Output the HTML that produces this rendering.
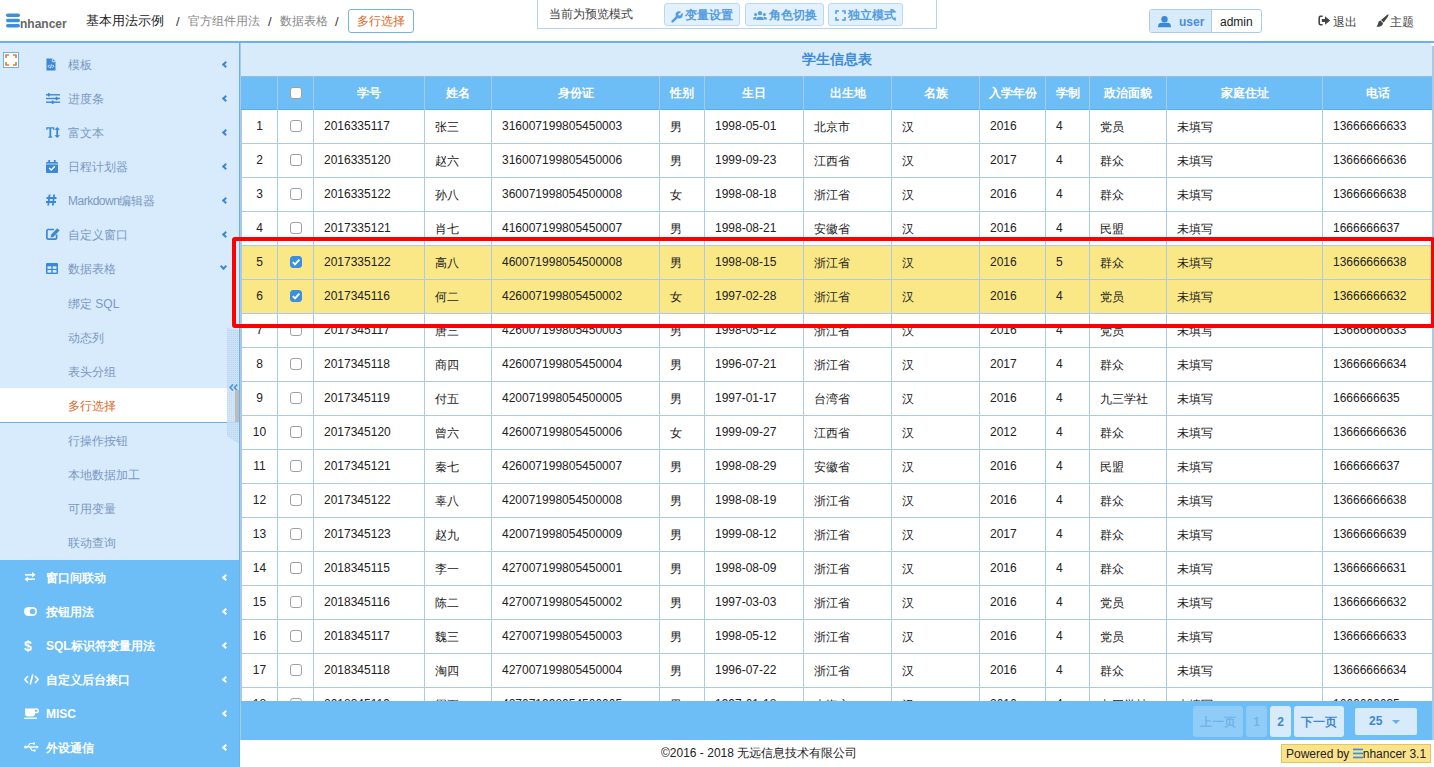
<!DOCTYPE html>
<html><head><meta charset="utf-8">
<style>
*{box-sizing:border-box}
html,body{margin:0;padding:0}
body{width:1434px;height:767px;overflow:hidden;position:relative;background:#fff;font-family:"Liberation Sans",sans-serif;color:#333}
.abs{position:absolute}
#hdr{position:absolute;left:0;top:0;width:1434px;height:43px;background:#fff;border-bottom:2px solid #6cb1e9}
#side{position:absolute;left:0;top:43px;width:240px;height:724px;background:#d8ebfc;border-right:1px solid #64b3ee;overflow:hidden}
.si{position:absolute;left:0;width:239px;height:34px}
.si .ico{position:absolute;left:46px;top:0;height:34px;display:flex;align-items:center}
.si .st{position:absolute;left:68px;top:1px;line-height:34px;font-size:12px;color:#7b98c2}
.chev{position:absolute;left:223px;top:15px;width:5px;height:5px;border-left:2px solid #3b88d4;border-bottom:2px solid #3b88d4;transform:rotate(45deg)}
.chev.down{transform:rotate(-45deg);left:221px;top:13px}
.chev.w{border-color:#fff}
.sub{position:absolute;left:0;width:239px;height:34px;line-height:37px;padding-left:68px;font-size:12px;color:#7b98c2}
.sub.act{background:#fff;color:#d9692a;border-bottom:1px solid #6cb1e9;height:35px}
#dark{position:absolute;left:0;top:517px;width:239px;height:220px;background:#6dbdf6}
.di{position:absolute;left:0;width:239px;height:34px}
.di .ico{position:absolute;left:24px;top:0;height:34px;display:flex;align-items:center}
.di .dt{position:absolute;left:46px;top:1px;line-height:34px;font-size:12px;color:#fff;font-weight:bold}
#main{position:absolute;left:241px;top:43px;width:1193px;height:697px;background:#d8ebfb;overflow:hidden}
#cap{position:absolute;left:0;top:0;width:1191px;height:33px;text-align:center;line-height:33px;font-size:14px;color:#3d8bd8;font-weight:bold}
#thead{position:absolute;left:0;top:33px;width:1191px;height:34px;background:#6dbdf6;border-top:1px solid #8dbde6;border-bottom:1px solid #5aaee9}
.hc{position:absolute;top:0;height:33px;line-height:33px;text-align:center;color:#fff;font-weight:bold;font-size:12px}
#tbody{position:absolute;left:0;top:67px;width:1191px;height:591px;background:#fff;overflow:hidden}
.row{position:absolute;left:0;width:1191px;height:34px;border-bottom:1px solid #a9cbe8;background:#fff}
.row.sel{background:#fae886}
.bc{position:absolute;top:0;height:33px;line-height:33px;font-size:12px;color:#222;padding-left:10px;white-space:nowrap}
.bc.ctr{text-align:center;padding-left:0}
.bc.cj{top:1px}
.vl{position:absolute;top:33px;width:1px;height:625px;background:#a9cbe8}
.hc.vlh{}
.c0{left:1px;width:35px}
.c1{left:37px;width:35px}
.c2{left:73px;width:110px}
.c3{left:184px;width:66px}
.c4{left:251px;width:167px}
.c5{left:419px;width:44px}
.c6{left:464px;width:98px}
.c7{left:563px;width:87px}
.c8{left:651px;width:87px}
.c9{left:739px;width:65px}
.c10{left:805px;width:43px}
.c11{left:849px;width:76px}
.c12{left:926px;width:155px}
.c13{left:1082px;width:109px}
.cb{display:inline-block;width:12px;height:12px;border:1px solid #a0a0a0;border-radius:3px;background:#fff;vertical-align:middle;position:relative;top:-1px;left:0px}
.cb.on{background:#3b8fe3;border-color:#3b8fe3}
.cb svg{position:absolute;left:-1px;top:-1px}
#pager{position:absolute;left:0;top:658px;width:1193px;height:39px;background:#6dbdf6}
.pb{position:absolute;top:5px;height:31px;line-height:33px;font-size:12px;text-align:center;border-radius:3px}
#foot{position:absolute;left:241px;top:740px;width:1193px;height:27px;background:#fff}

.hb{position:absolute;height:23px;background:#e2f1fd;border:1px solid #b9d8f3;border-radius:3px;font-size:12px;font-weight:bold;color:#559ce0;line-height:21px;display:flex;align-items:center;justify-content:center;white-space:nowrap;padding-top:2px}
#redbox{position:absolute;left:232px;top:237px;width:1203px;height:91px;border:4px solid #f00;border-radius:3px}
</style></head><body>
<div id="hdr">
  <svg class="abs" style="left:6px;top:13px" width="14" height="15" viewBox="0 0 14 15"><rect x="0" y="0.5" width="14" height="3.6" rx="1.8" fill="#3b8fdc"/><rect x="0" y="5.7" width="14" height="3.6" rx="1.8" fill="#3b8fdc"/><rect x="0" y="10.9" width="14" height="3.6" rx="1.8" fill="#3b8fdc"/></svg>
  <div class="abs" style="left:20px;top:17px;font-size:12px;font-weight:bold;color:#666;line-height:14px">nhancer</div>
  <div class="abs" style="left:86px;top:12px;font-size:13px;color:#222;line-height:18px">基本用法示例</div>
  <div class="abs" style="left:176px;top:13px;font-size:13px;color:#333;line-height:17px">/</div>
  <div class="abs" style="left:188px;top:13px;font-size:12px;color:#888;line-height:17px">官方组件用法</div>
  <div class="abs" style="left:268px;top:13px;font-size:13px;color:#333;line-height:17px">/</div>
  <div class="abs" style="left:280px;top:13px;font-size:12px;color:#888;line-height:17px">数据表格</div>
  <div class="abs" style="left:335px;top:13px;font-size:13px;color:#333;line-height:17px">/</div>
  <div class="abs" style="left:348px;top:9px;width:66px;height:24px;border:1px solid #76b4e6;border-radius:3px;font-size:12px;color:#d9692a;line-height:22px;text-align:center">多行选择</div>

  <div class="abs" style="left:537px;top:-2px;width:400px;height:31px;border:1px solid #b4d4ef;border-top:none"></div>
  <div class="abs" style="left:549px;top:6px;font-size:12px;color:#444;line-height:17px">当前为预览模式</div>
  <div class="abs hb" style="left:664px;top:3px;width:76px;">
    <svg width="12" height="12" viewBox="0 0 12 12" style="margin-right:2px;position:relative;top:1px"><path d="M1.6 10.4L6.2 5.8" stroke="#559ce0" stroke-width="2.4" stroke-linecap="round"/><circle cx="8.2" cy="3.8" r="3.6" fill="#559ce0"/><path d="M8.2 3.8L10.4 -0.5L12.5 1.6Z" fill="#e2f1fd"/><circle cx="8.6" cy="3.4" r="1.2" fill="#e2f1fd"/></svg>变量设置</div>
  <div class="abs hb" style="left:745px;top:3px;width:79px;">
    <svg width="14" height="9" viewBox="0 0 14 9" style="margin-right:2px"><circle cx="7" cy="2.2" r="2.1" fill="#559ce0"/><path d="M3.2 9A3.8 3.2 0 0 1 10.8 9Z" fill="#559ce0"/><circle cx="2.6" cy="3.6" r="1.5" fill="#559ce0"/><circle cx="11.4" cy="3.6" r="1.5" fill="#559ce0"/><path d="M0 8.6A2.6 2.6 0 0 1 3.6 6L2.8 8.6Z M14 8.6A2.6 2.6 0 0 0 10.4 6L11.2 8.6Z" fill="#559ce0"/></svg>角色切换</div>
  <div class="abs hb" style="left:828px;top:3px;width:75px;">
    <svg width="11" height="11" viewBox="0 0 11 11" style="margin-right:2px"><path d="M1 4V1H4M7 1H10V4M10 7V10H7M4 10H1V7" fill="none" stroke="#559ce0" stroke-width="1.6"/></svg>独立模式</div>

  <div class="abs" style="left:1149px;top:9px;width:113px;height:24px;border:1px solid #a9cdea;border-radius:3px;background:#fff;overflow:hidden">
    <div class="abs" style="left:0;top:0;width:62px;height:22px;background:#d8ebfb;border-right:1px solid #a9cdea"></div>
    <svg class="abs" style="left:8px;top:6px" width="13" height="12" viewBox="0 0 13 12"><circle cx="6.5" cy="3.3" r="3.2" fill="#3b88d4"/><path d="M0 11.2Q0 6.8 3.6 6.8H9.4Q13 6.8 13 11.2Z" fill="#3b88d4"/></svg>
    <div class="abs" style="left:29px;top:3px;font-size:12px;font-weight:bold;color:#4a90d9;line-height:18px">user</div>
    <div class="abs" style="left:70px;top:3px;font-size:12px;color:#222;line-height:18px">admin</div>
  </div>
  <svg class="abs" style="left:1318px;top:15px" width="13" height="11" viewBox="0 0 13 11"><path d="M4.6 1.3H2.6Q1.2 1.3 1.2 2.7V8.3Q1.2 9.7 2.6 9.7H4.6" fill="none" stroke="#444" stroke-width="1.6"/><path d="M3.8 3.9H7V1.2L12.2 5.5L7 9.8V7.1H3.8Z" fill="#444"/></svg>
  <div class="abs" style="left:1333px;top:14px;font-size:12px;color:#444;line-height:16px">退出</div>
  <svg class="abs" style="left:1376px;top:14px" width="13" height="13" viewBox="0 0 13 13"><path d="M12.4 0.4Q13 1 11.2 3.8L7.6 8.4L5 6L9.8 1.9Q12 -0.1 12.4 0.4Z" fill="#444"/><path d="M4.4 6.6L7 9Q6.9 11.8 3.8 12.5Q1.8 12.9 0.4 12.4Q1.8 11.4 2 9.8Q2.3 7 4.4 6.6Z" fill="#444"/></svg>
  <div class="abs" style="left:1390px;top:14px;font-size:12px;color:#444;line-height:16px">主题</div>
</div>

<div id="side">
  <div id="dark"></div>
  <div class="abs" style="left:3px;top:9px;width:16px;height:16px;border:1px solid #6cb1e9;background:#fff">
    <svg class="abs" style="left:1px;top:1px" width="12" height="12" viewBox="0 0 12 12"><path d="M1 4V1H4M8 1H11V4M11 8V11H8M4 11H1V8" fill="none" stroke="#e57a2e" stroke-width="1.6"/></svg>
  </div>
<div class="si" style="top:4px"><span class="ico"><svg width="10" height="13" viewBox="0 0 10 13"><path d="M0.5 0.5H6.5L9.5 3.5V12.5H0.5Z" fill="#3b88d4"/><path d="M6.3 0.5V3.7H9.5" fill="none" stroke="#d8ebfb" stroke-width="0.9"/><path d="M3.6 6.8L2.2 8.3L3.6 9.8M6.4 6.8L7.8 8.3L6.4 9.8M5.5 6.5L4.5 10.2" fill="none" stroke="#fff" stroke-width="0.9"/></svg></span><span class="st">模板</span><span class="chev left"></span></div>
<div class="si" style="top:38px"><span class="ico"><svg width="14" height="11" viewBox="0 0 14 11"><rect x="0" y="1.1" width="14" height="1.4" fill="#3b88d4"/><rect x="0" y="4.8" width="14" height="1.4" fill="#3b88d4"/><rect x="0" y="8.5" width="14" height="1.4" fill="#3b88d4"/><rect x="1.8" y="0" width="2" height="3.6" rx="0.8" fill="#3b88d4"/><rect x="9.6" y="3.7" width="2" height="3.6" rx="0.8" fill="#3b88d4"/><rect x="5.6" y="7.4" width="2" height="3.6" rx="0.8" fill="#3b88d4"/></svg></span><span class="st">进度条</span><span class="chev left"></span></div>
<div class="si" style="top:72px"><span class="ico"><svg width="14" height="11" viewBox="0 0 14 11"><path d="M0.3 0.3H8.3V3H7.3L7 1.6H5.2V9.4L6.2 9.6V10.7H2.4V9.6L3.4 9.4V1.6H1.6L1.3 3H0.3Z" fill="#3b88d4"/><path d="M11.2 0L14 2.8H12.1V8.2H14L11.2 11L8.4 8.2H10.3V2.8H8.4Z" fill="#3b88d4"/></svg></span><span class="st">富文本</span><span class="chev left"></span></div>
<div class="si" style="top:106px"><span class="ico"><svg width="12" height="13" viewBox="0 0 12 13"><rect x="0" y="2" width="12" height="11" rx="1" fill="#3b88d4"/><rect x="2.3" y="0" width="1.8" height="3" fill="#3b88d4"/><rect x="7.9" y="0" width="1.8" height="3" fill="#3b88d4"/><rect x="0" y="3.6" width="12" height="0.8" fill="#d8ebfb"/><path d="M3.2 8L5.2 10L8.9 6.2" fill="none" stroke="#fff" stroke-width="1.4"/></svg></span><span class="st">日程计划器</span><span class="chev left"></span></div>
<div class="si" style="top:140px"><span class="ico"><svg width="11" height="12" viewBox="0 0 11 12"><path d="M3.6 0.5L2.2 11.5M8.2 0.5L6.8 11.5M0.5 4H10.5M0 8H10" fill="none" stroke="#3b88d4" stroke-width="1.8"/></svg></span><span class="st"><span style="letter-spacing:-0.5px">Markdown</span>编辑器</span><span class="chev left"></span></div>
<div class="si" style="top:174px"><span class="ico"><svg width="14" height="12" viewBox="0 0 14 12"><path d="M8 1.5H2A1.3 1.3 0 0 0 0.9 2.8V10A1.3 1.3 0 0 0 2.2 11.1H9.4A1.3 1.3 0 0 0 10.6 10V6.5" fill="none" stroke="#3b88d4" stroke-width="1.7"/><path d="M11.3 0.3L13.6 2.6L7.3 8.9L4.6 9.5L5.2 6.6Z" fill="#3b88d4"/></svg></span><span class="st">自定义窗口</span><span class="chev left"></span></div>
<div class="si" style="top:208px"><span class="ico"><svg width="12" height="11" viewBox="0 0 12 11"><rect x="0" y="0" width="12" height="11" rx="1" fill="#3b88d4"/><rect x="1.5" y="3.3" width="3.8" height="2.6" fill="#d8ebfb"/><rect x="6.7" y="3.3" width="3.8" height="2.6" fill="#d8ebfb"/><rect x="1.5" y="7" width="3.8" height="2.6" fill="#d8ebfb"/><rect x="6.7" y="7" width="3.8" height="2.6" fill="#d8ebfb"/></svg></span><span class="st">数据表格</span><span class="chev down"></span></div>
<div class="sub" style="top:243px">绑定 SQL</div>
<div class="sub" style="top:277px">动态列</div>
<div class="sub" style="top:311px">表头分组</div>
<div class="sub act" style="top:345px">多行选择</div>
<div class="sub" style="top:380px">行操作按钮</div>
<div class="sub" style="top:414px">本地数据加工</div>
<div class="sub" style="top:448px">可用变量</div>
<div class="sub" style="top:482px">联动查询</div>
<div class="di" style="top:517px"><span class="ico"><svg width="12" height="10" viewBox="0 0 12 10"><path d="M1 2.8H10" fill="none" stroke="#fff" stroke-width="1.6"/><path d="M8 0L11.5 2.8L8 5.6Z" fill="#fff"/><path d="M11 7.2H2" fill="none" stroke="#fff" stroke-width="1.6"/><path d="M4 4.4L0.5 7.2L4 10Z" fill="#fff"/></svg></span><span class="dt">窗口间联动</span><span class="chev left w"></span></div>
<div class="di" style="top:551px"><span class="ico"><svg width="13" height="9" viewBox="0 0 13 9"><rect x="0" y="0" width="13" height="9" rx="4.5" fill="#fff"/><circle cx="8.6" cy="4.5" r="2.8" fill="#6dbdf6"/></svg></span><span class="dt">按钮用法</span><span class="chev left w"></span></div>
<div class="di" style="top:585px"><span class="ico"><span style="font-weight:bold;font-size:14px;color:#fff;line-height:14px;position:relative;top:1px">$</span></span><span class="dt">SQL标识符变量用法</span><span class="chev left w"></span></div>
<div class="di" style="top:619px"><span class="ico"><svg width="15" height="11" viewBox="0 0 15 11"><path d="M4 2L0.9 5.5L4 9M11 2L14.1 5.5L11 9M8.8 0.5L6.2 10.5" fill="none" stroke="#fff" stroke-width="1.6"/></svg></span><span class="dt">自定义后台接口</span><span class="chev left w"></span></div>
<div class="di" style="top:653px"><span class="ico"><svg width="15" height="11" viewBox="0 0 15 11"><path d="M1 0.5H11V5.5A3 3 0 0 1 8 8.5H4A3 3 0 0 1 1 5.5Z" fill="#fff"/><path d="M10.5 1H12.5A1.8 1.8 0 0 1 12.5 4.6H10.5" fill="none" stroke="#fff" stroke-width="1.5"/><rect x="0" y="9.6" width="13" height="1.3" fill="#fff"/></svg></span><span class="dt">MISC</span><span class="chev left w"></span></div>
<div class="di" style="top:687px"><span class="ico"><svg width="15" height="10" viewBox="0 0 15 10"><path d="M0.5 5H13" fill="none" stroke="#fff" stroke-width="1.4"/><circle cx="1.5" cy="5" r="1.5" fill="#fff"/><path d="M3.5 5L6 1.5H9M6 5L8 8.5H10" fill="none" stroke="#fff" stroke-width="1.2"/><rect x="9" y="0.5" width="2" height="2" fill="#fff"/><circle cx="10.5" cy="8.5" r="1.2" fill="#fff"/><path d="M12.5 3.3L15 5L12.5 6.7Z" fill="#fff"/></svg></span><span class="dt">外设通信</span><span class="chev left w"></span></div>
</div>

<div id="main">
  <div id="cap">学生信息表</div>
  <div id="tbody">
<div class="row" style="top:0px"><div class="bc c0 ctr">1</div><div class="bc c1 ctr"><i class="cb"></i></div><div class="bc c2">2016335117</div><div class="bc c3 cj">张三</div><div class="bc c4">316007199805450003</div><div class="bc c5 cj">男</div><div class="bc c6">1998-05-01</div><div class="bc c7 cj">北京市</div><div class="bc c8 cj">汉</div><div class="bc c9">2016</div><div class="bc c10">4</div><div class="bc c11 cj">党员</div><div class="bc c12 cj">未填写</div><div class="bc c13">13666666633</div></div>
<div class="row" style="top:34px"><div class="bc c0 ctr">2</div><div class="bc c1 ctr"><i class="cb"></i></div><div class="bc c2">2016335120</div><div class="bc c3 cj">赵六</div><div class="bc c4">316007199805450006</div><div class="bc c5 cj">男</div><div class="bc c6">1999-09-23</div><div class="bc c7 cj">江西省</div><div class="bc c8 cj">汉</div><div class="bc c9">2017</div><div class="bc c10">4</div><div class="bc c11 cj">群众</div><div class="bc c12 cj">未填写</div><div class="bc c13">13666666636</div></div>
<div class="row" style="top:68px"><div class="bc c0 ctr">3</div><div class="bc c1 ctr"><i class="cb"></i></div><div class="bc c2">2016335122</div><div class="bc c3 cj">孙八</div><div class="bc c4">360071998054500008</div><div class="bc c5 cj">女</div><div class="bc c6">1998-08-18</div><div class="bc c7 cj">浙江省</div><div class="bc c8 cj">汉</div><div class="bc c9">2016</div><div class="bc c10">4</div><div class="bc c11 cj">群众</div><div class="bc c12 cj">未填写</div><div class="bc c13">13666666638</div></div>
<div class="row" style="top:102px"><div class="bc c0 ctr">4</div><div class="bc c1 ctr"><i class="cb"></i></div><div class="bc c2">2017335121</div><div class="bc c3 cj">肖七</div><div class="bc c4">416007199805450007</div><div class="bc c5 cj">男</div><div class="bc c6">1998-08-21</div><div class="bc c7 cj">安徽省</div><div class="bc c8 cj">汉</div><div class="bc c9">2016</div><div class="bc c10">4</div><div class="bc c11 cj">民盟</div><div class="bc c12 cj">未填写</div><div class="bc c13">1666666637</div></div>
<div class="row sel" style="top:136px"><div class="bc c0 ctr">5</div><div class="bc c1 ctr"><i class="cb on"><svg width="12" height="12" viewBox="0 0 12 12"><path d="M2.8 6.2 L5 8.4 L9.4 3.6" fill="none" stroke="#fff" stroke-width="1.8"/></svg></i></div><div class="bc c2">2017335122</div><div class="bc c3 cj">高八</div><div class="bc c4">460071998054500008</div><div class="bc c5 cj">男</div><div class="bc c6">1998-08-15</div><div class="bc c7 cj">浙江省</div><div class="bc c8 cj">汉</div><div class="bc c9">2016</div><div class="bc c10">5</div><div class="bc c11 cj">群众</div><div class="bc c12 cj">未填写</div><div class="bc c13">13666666638</div></div>
<div class="row sel" style="top:170px"><div class="bc c0 ctr">6</div><div class="bc c1 ctr"><i class="cb on"><svg width="12" height="12" viewBox="0 0 12 12"><path d="M2.8 6.2 L5 8.4 L9.4 3.6" fill="none" stroke="#fff" stroke-width="1.8"/></svg></i></div><div class="bc c2">2017345116</div><div class="bc c3 cj">何二</div><div class="bc c4">426007199805450002</div><div class="bc c5 cj">女</div><div class="bc c6">1997-02-28</div><div class="bc c7 cj">浙江省</div><div class="bc c8 cj">汉</div><div class="bc c9">2016</div><div class="bc c10">4</div><div class="bc c11 cj">党员</div><div class="bc c12 cj">未填写</div><div class="bc c13">13666666632</div></div>
<div class="row" style="top:204px"><div class="bc c0 ctr">7</div><div class="bc c1 ctr"><i class="cb"></i></div><div class="bc c2">2017345117</div><div class="bc c3 cj">唐三</div><div class="bc c4">426007199805450003</div><div class="bc c5 cj">男</div><div class="bc c6">1998-05-12</div><div class="bc c7 cj">浙江省</div><div class="bc c8 cj">汉</div><div class="bc c9">2016</div><div class="bc c10">4</div><div class="bc c11 cj">党员</div><div class="bc c12 cj">未填写</div><div class="bc c13">13666666633</div></div>
<div class="row" style="top:238px"><div class="bc c0 ctr">8</div><div class="bc c1 ctr"><i class="cb"></i></div><div class="bc c2">2017345118</div><div class="bc c3 cj">商四</div><div class="bc c4">426007199805450004</div><div class="bc c5 cj">男</div><div class="bc c6">1996-07-21</div><div class="bc c7 cj">浙江省</div><div class="bc c8 cj">汉</div><div class="bc c9">2017</div><div class="bc c10">4</div><div class="bc c11 cj">群众</div><div class="bc c12 cj">未填写</div><div class="bc c13">13666666634</div></div>
<div class="row" style="top:272px"><div class="bc c0 ctr">9</div><div class="bc c1 ctr"><i class="cb"></i></div><div class="bc c2">2017345119</div><div class="bc c3 cj">付五</div><div class="bc c4">420071998054500005</div><div class="bc c5 cj">男</div><div class="bc c6">1997-01-17</div><div class="bc c7 cj">台湾省</div><div class="bc c8 cj">汉</div><div class="bc c9">2016</div><div class="bc c10">4</div><div class="bc c11 cj">九三学社</div><div class="bc c12 cj">未填写</div><div class="bc c13">1666666635</div></div>
<div class="row" style="top:306px"><div class="bc c0 ctr">10</div><div class="bc c1 ctr"><i class="cb"></i></div><div class="bc c2">2017345120</div><div class="bc c3 cj">曾六</div><div class="bc c4">426007199805450006</div><div class="bc c5 cj">女</div><div class="bc c6">1999-09-27</div><div class="bc c7 cj">江西省</div><div class="bc c8 cj">汉</div><div class="bc c9">2012</div><div class="bc c10">4</div><div class="bc c11 cj">群众</div><div class="bc c12 cj">未填写</div><div class="bc c13">13666666636</div></div>
<div class="row" style="top:340px"><div class="bc c0 ctr">11</div><div class="bc c1 ctr"><i class="cb"></i></div><div class="bc c2">2017345121</div><div class="bc c3 cj">秦七</div><div class="bc c4">426007199805450007</div><div class="bc c5 cj">男</div><div class="bc c6">1998-08-29</div><div class="bc c7 cj">安徽省</div><div class="bc c8 cj">汉</div><div class="bc c9">2016</div><div class="bc c10">4</div><div class="bc c11 cj">民盟</div><div class="bc c12 cj">未填写</div><div class="bc c13">1666666637</div></div>
<div class="row" style="top:374px"><div class="bc c0 ctr">12</div><div class="bc c1 ctr"><i class="cb"></i></div><div class="bc c2">2017345122</div><div class="bc c3 cj">辜八</div><div class="bc c4">420071998054500008</div><div class="bc c5 cj">男</div><div class="bc c6">1998-08-19</div><div class="bc c7 cj">浙江省</div><div class="bc c8 cj">汉</div><div class="bc c9">2016</div><div class="bc c10">4</div><div class="bc c11 cj">群众</div><div class="bc c12 cj">未填写</div><div class="bc c13">13666666638</div></div>
<div class="row" style="top:408px"><div class="bc c0 ctr">13</div><div class="bc c1 ctr"><i class="cb"></i></div><div class="bc c2">2017345123</div><div class="bc c3 cj">赵九</div><div class="bc c4">420071998054500009</div><div class="bc c5 cj">男</div><div class="bc c6">1999-08-12</div><div class="bc c7 cj">浙江省</div><div class="bc c8 cj">汉</div><div class="bc c9">2017</div><div class="bc c10">4</div><div class="bc c11 cj">群众</div><div class="bc c12 cj">未填写</div><div class="bc c13">13666666639</div></div>
<div class="row" style="top:442px"><div class="bc c0 ctr">14</div><div class="bc c1 ctr"><i class="cb"></i></div><div class="bc c2">2018345115</div><div class="bc c3 cj">李一</div><div class="bc c4">427007199805450001</div><div class="bc c5 cj">男</div><div class="bc c6">1998-08-09</div><div class="bc c7 cj">浙江省</div><div class="bc c8 cj">汉</div><div class="bc c9">2016</div><div class="bc c10">4</div><div class="bc c11 cj">群众</div><div class="bc c12 cj">未填写</div><div class="bc c13">13666666631</div></div>
<div class="row" style="top:476px"><div class="bc c0 ctr">15</div><div class="bc c1 ctr"><i class="cb"></i></div><div class="bc c2">2018345116</div><div class="bc c3 cj">陈二</div><div class="bc c4">427007199805450002</div><div class="bc c5 cj">男</div><div class="bc c6">1997-03-03</div><div class="bc c7 cj">浙江省</div><div class="bc c8 cj">汉</div><div class="bc c9">2016</div><div class="bc c10">4</div><div class="bc c11 cj">党员</div><div class="bc c12 cj">未填写</div><div class="bc c13">13666666632</div></div>
<div class="row" style="top:510px"><div class="bc c0 ctr">16</div><div class="bc c1 ctr"><i class="cb"></i></div><div class="bc c2">2018345117</div><div class="bc c3 cj">魏三</div><div class="bc c4">427007199805450003</div><div class="bc c5 cj">男</div><div class="bc c6">1998-05-12</div><div class="bc c7 cj">浙江省</div><div class="bc c8 cj">汉</div><div class="bc c9">2016</div><div class="bc c10">4</div><div class="bc c11 cj">党员</div><div class="bc c12 cj">未填写</div><div class="bc c13">13666666633</div></div>
<div class="row" style="top:544px"><div class="bc c0 ctr">17</div><div class="bc c1 ctr"><i class="cb"></i></div><div class="bc c2">2018345118</div><div class="bc c3 cj">淘四</div><div class="bc c4">427007199805450004</div><div class="bc c5 cj">男</div><div class="bc c6">1996-07-22</div><div class="bc c7 cj">浙江省</div><div class="bc c8 cj">汉</div><div class="bc c9">2016</div><div class="bc c10">4</div><div class="bc c11 cj">群众</div><div class="bc c12 cj">未填写</div><div class="bc c13">13666666634</div></div>
<div class="row" style="top:578px"><div class="bc c0 ctr">18</div><div class="bc c1 ctr"><i class="cb"></i></div><div class="bc c2">2018345119</div><div class="bc c3 cj">周五</div><div class="bc c4">427071998054500005</div><div class="bc c5 cj">男</div><div class="bc c6">1997-01-18</div><div class="bc c7 cj">上海市</div><div class="bc c8 cj">汉</div><div class="bc c9">2016</div><div class="bc c10">4</div><div class="bc c11 cj">九三学社</div><div class="bc c12 cj">未填写</div><div class="bc c13">1666666635</div></div>
  </div>
  <div id="thead"><div class="hc c0"></div><div class="hc c1"><i class="cb"></i></div><div class="hc c2">学号</div><div class="hc c3">姓名</div><div class="hc c4">身份证</div><div class="hc c5">性别</div><div class="hc c6">生日</div><div class="hc c7">出生地</div><div class="hc c8">名族</div><div class="hc c9">入学年份</div><div class="hc c10">学制</div><div class="hc c11">政治面貌</div><div class="hc c12">家庭住址</div><div class="hc c13">电话</div></div>
  <div class="vl" style="left:36px"></div><div class="vl" style="left:72px"></div><div class="vl" style="left:183px"></div><div class="vl" style="left:250px"></div><div class="vl" style="left:418px"></div><div class="vl" style="left:463px"></div><div class="vl" style="left:562px"></div><div class="vl" style="left:650px"></div><div class="vl" style="left:738px"></div><div class="vl" style="left:804px"></div><div class="vl" style="left:848px"></div><div class="vl" style="left:925px"></div><div class="vl" style="left:1081px"></div>
  <div id="pager">
    <div class="pb" style="left:952px;width:50px;background:#8fcdf8;color:#72b4e8;font-weight:bold">上一页</div>
    <div class="pb" style="left:1005px;width:21px;background:#8fcdf8;color:#72b4e8;font-weight:bold">1</div>
    <div class="pb" style="left:1029px;width:21px;background:#d8ebfb;color:#3b88d4;font-weight:bold">2</div>
    <div class="pb" style="left:1053px;width:50px;background:#d8ebfb;color:#4288cc;font-weight:bold">下一页</div>
    <div class="pb" style="left:1114px;top:7px;height:27px;line-height:27px;width:62px;background:#d8ebfb;color:#3b88d4;font-weight:bold;text-align:left;padding-left:14px;border-radius:2px">25<span style="position:absolute;left:37px;top:12px;border-left:4px solid transparent;border-right:4px solid transparent;border-top:4px solid #6aaee6"></span></div>
  </div>
</div>
<div class="abs" style="left:1432px;top:43px;width:2px;height:697px;background:#a9c9e6"></div><div class="abs" style="left:1431px;top:43px;width:3px;height:3px;background:#fff;border-bottom-left-radius:3px"></div>
<svg class="abs" style="left:227px;top:328px" width="12" height="116" viewBox="0 0 12 116"><defs><pattern id="hp" width="2" height="2" patternUnits="userSpaceOnUse"><rect width="2" height="2" fill="#c9e0f5"/><rect width="1" height="1" fill="#b3d2ee"/></pattern></defs><path d="M0 0L12 2V116L0 108Z" fill="url(#hp)" opacity="0.85"/></svg>
<svg class="abs" style="left:229px;top:384px" width="9" height="7" viewBox="0 0 9 7"><path d="M4 0.6L1.2 3.5L4 6.4M8.2 0.6L5.4 3.5L8.2 6.4" fill="none" stroke="#4a90d9" stroke-width="1.5"/></svg>
<div class="abs" style="left:235px;top:390px;width:4px;height:32px;background:#bcbcbc"></div>

<div class="abs" style="left:240px;top:43px;width:1px;height:697px;background:#a9c9e6"></div><div class="abs" style="left:241px;top:110px;width:1px;height:591px;background:#a9c9e6"></div>
<div id="foot">
  <div class="abs" style="left:420px;top:5px;font-size:12px;color:#222;line-height:16px">©2016 - 2018 无远信息技术有限公司</div>
  <div class="abs" style="left:1040px;top:4px;width:150px;height:19px;background:#fbe38b;border:1px solid #e6c65a;font-size:12px;color:#222;line-height:18px;padding-left:4px">Powered by <svg width="10" height="11" viewBox="0 0 10 11" style="vertical-align:-1px"><rect x="0" y="0.6" width="10" height="1.7" fill="#3b8fdc"/><rect x="0" y="4.6" width="10" height="1.7" fill="#3b8fdc"/><rect x="0" y="8.6" width="10" height="1.7" fill="#3b8fdc"/></svg>nhancer 3.1</div>
</div>
<div id="redbox"></div>
</body></html>
